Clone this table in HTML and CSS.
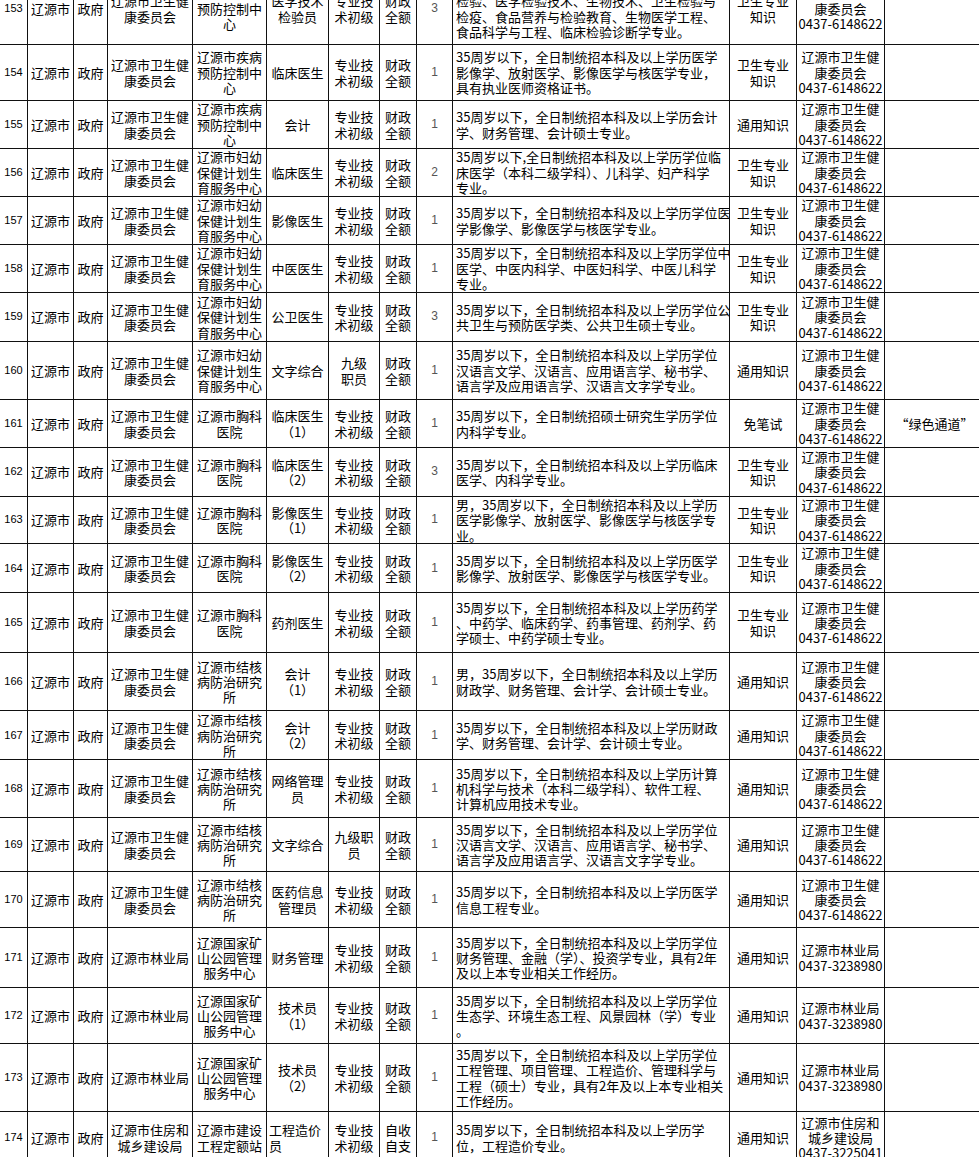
FILE: index.html
```html
<!DOCTYPE html>
<html lang="zh-CN">
<head>
<meta charset="utf-8">
<title>招聘岗位表</title>
<link rel="stylesheet" href="styles.css">
</head>
<body>
<table class="sheet">
<colgroup>
<col class="c-no"><col class="c-area"><col class="c-type"><col class="c-dept"><col class="c-unit"><col class="c-post"><col class="c-level"><col class="c-fund"><col class="c-num"><col class="c-cond"><col class="c-exam"><col class="c-tel"><col class="c-note">
</colgroup>
<tbody>
<tr class="h72"><td class="no">153</td><td>辽源市</td><td>政府</td><td>辽源市卫生健<br>康委员会</td><td>辽源市疾病<br>预防控制中<br>心</td><td>医学技术<br>检验员</td><td>专业技<br>术初级</td><td>财政<br>全额</td><td class="num">3</td><td class="cond">35周岁以下，全日制统招本科及以上学历医学<br>检验、医学检验技术、生物技术、卫生检验与<br>检疫、食品营养与检验教育、生物医学工程、<br>食品科学与工程、临床检验诊断学专业。</td><td>卫生专业<br>知识</td><td>辽源市卫生健<br>康委员会<br>0437-6148622</td><td></td></tr>
<tr class="h56"><td class="no">154</td><td>辽源市</td><td>政府</td><td>辽源市卫生健<br>康委员会</td><td>辽源市疾病<br>预防控制中<br>心</td><td>临床医生</td><td>专业技<br>术初级</td><td>财政<br>全额</td><td class="num">1</td><td class="cond">35周岁以下，全日制统招本科及以上学历医学<br>影像学、放射医学、影像医学与核医学专业，<br>具有执业医师资格证书。</td><td>卫生专业<br>知识</td><td>辽源市卫生健<br>康委员会<br>0437-6148622</td><td></td></tr>
<tr class="h48"><td class="no">155</td><td>辽源市</td><td>政府</td><td>辽源市卫生健<br>康委员会</td><td>辽源市疾病<br>预防控制中<br>心</td><td>会计</td><td>专业技<br>术初级</td><td>财政<br>全额</td><td class="num">1</td><td class="cond">35周岁以下，全日制统招本科及以上学历会计<br>学、财务管理、会计硕士专业。</td><td>通用知识</td><td>辽源市卫生健<br>康委员会<br>0437-6148622</td><td></td></tr>
<tr class="h48"><td class="no">156</td><td>辽源市</td><td>政府</td><td>辽源市卫生健<br>康委员会</td><td>辽源市妇幼<br>保健计划生<br>育服务中心</td><td>临床医生</td><td>专业技<br>术初级</td><td>财政<br>全额</td><td class="num">2</td><td class="cond">35周岁以下,全日制统招本科及以上学历学位临<br>床医学（本科二级学科）、儿科学、妇产科学<br>专业。</td><td>卫生专业<br>知识</td><td>辽源市卫生健<br>康委员会<br>0437-6148622</td><td></td></tr>
<tr class="h48"><td class="no">157</td><td>辽源市</td><td>政府</td><td>辽源市卫生健<br>康委员会</td><td>辽源市妇幼<br>保健计划生<br>育服务中心</td><td>影像医生</td><td>专业技<br>术初级</td><td>财政<br>全额</td><td class="num">1</td><td class="cond">35周岁以下，全日制统招本科及以上学历学位医<br>学影像学、影像医学与核医学专业。</td><td>卫生专业<br>知识</td><td>辽源市卫生健<br>康委员会<br>0437-6148622</td><td></td></tr>
<tr class="h48"><td class="no">158</td><td>辽源市</td><td>政府</td><td>辽源市卫生健<br>康委员会</td><td>辽源市妇幼<br>保健计划生<br>育服务中心</td><td>中医医生</td><td>专业技<br>术初级</td><td>财政<br>全额</td><td class="num">1</td><td class="cond">35周岁以下，全日制统招本科及以上学历学位中<br>医学、中医内科学、中医妇科学、中医儿科学<br>专业。</td><td>卫生专业<br>知识</td><td>辽源市卫生健<br>康委员会<br>0437-6148622</td><td></td></tr>
<tr class="h49"><td class="no">159</td><td>辽源市</td><td>政府</td><td>辽源市卫生健<br>康委员会</td><td>辽源市妇幼<br>保健计划生<br>育服务中心</td><td>公卫医生</td><td>专业技<br>术初级</td><td>财政<br>全额</td><td class="num">3</td><td class="cond">35周岁以下，全日制统招本科及以上学历学位公<br>共卫生与预防医学类、公共卫生硕士专业。</td><td>卫生专业<br>知识</td><td>辽源市卫生健<br>康委员会<br>0437-6148622</td><td></td></tr>
<tr class="h58"><td class="no">160</td><td>辽源市</td><td>政府</td><td>辽源市卫生健<br>康委员会</td><td>辽源市妇幼<br>保健计划生<br>育服务中心</td><td>文字综合</td><td>九级<br>职员</td><td>财政<br>全额</td><td class="num">1</td><td class="cond">35周岁以下，全日制统招本科及以上学历学位<br>汉语言文学、汉语言、应用语言学、秘书学、<br>语言学及应用语言学、汉语言文字学专业。</td><td>通用知识</td><td>辽源市卫生健<br>康委员会<br>0437-6148622</td><td></td></tr>
<tr class="h48"><td class="no">161</td><td>辽源市</td><td>政府</td><td>辽源市卫生健<br>康委员会</td><td>辽源市胸科<br>医院</td><td>临床医生<br>（1）</td><td>专业技<br>术初级</td><td>财政<br>全额</td><td class="num">1</td><td class="cond">35周岁以下，全日制统招硕士研究生学历学位<br>内科学专业。</td><td>免笔试</td><td>辽源市卫生健<br>康委员会<br>0437-6148622</td><td>“绿色通道”</td></tr>
<tr class="h49"><td class="no">162</td><td>辽源市</td><td>政府</td><td>辽源市卫生健<br>康委员会</td><td>辽源市胸科<br>医院</td><td>临床医生<br>（2）</td><td>专业技<br>术初级</td><td>财政<br>全额</td><td class="num">3</td><td class="cond">35周岁以下，全日制统招本科及以上学历临床<br>医学、内科学专业。</td><td>卫生专业<br>知识</td><td>辽源市卫生健<br>康委员会<br>0437-6148622</td><td></td></tr>
<tr class="h47"><td class="no">163</td><td>辽源市</td><td>政府</td><td>辽源市卫生健<br>康委员会</td><td>辽源市胸科<br>医院</td><td>影像医生<br>（1）</td><td>专业技<br>术初级</td><td>财政<br>全额</td><td class="num">1</td><td class="cond">男，35周岁以下，全日制统招本科及以上学历<br>医学影像学、放射医学、影像医学与核医学专<br>业。</td><td>卫生专业<br>知识</td><td>辽源市卫生健<br>康委员会<br>0437-6148622</td><td></td></tr>
<tr class="h49"><td class="no">164</td><td>辽源市</td><td>政府</td><td>辽源市卫生健<br>康委员会</td><td>辽源市胸科<br>医院</td><td>影像医生<br>（2）</td><td>专业技<br>术初级</td><td>财政<br>全额</td><td class="num">1</td><td class="cond">35周岁以下，全日制统招本科及以上学历医学<br>影像学、放射医学、影像医学与核医学专业。</td><td>卫生专业<br>知识</td><td>辽源市卫生健<br>康委员会<br>0437-6148622</td><td></td></tr>
<tr class="h60"><td class="no">165</td><td>辽源市</td><td>政府</td><td>辽源市卫生健<br>康委员会</td><td>辽源市胸科<br>医院</td><td>药剂医生</td><td>专业技<br>术初级</td><td>财政<br>全额</td><td class="num">1</td><td class="cond">35周岁以下，全日制统招本科及以上学历药学<br>、中药学、临床药学、药事管理、药剂学、药<br>学硕士、中药学硕士专业。</td><td>卫生专业<br>知识</td><td>辽源市卫生健<br>康委员会<br>0437-6148622</td><td></td></tr>
<tr class="h58"><td class="no">166</td><td>辽源市</td><td>政府</td><td>辽源市卫生健<br>康委员会</td><td>辽源市结核<br>病防治研究<br>所</td><td>会计<br>（1）</td><td>专业技<br>术初级</td><td>财政<br>全额</td><td class="num">1</td><td class="cond">男，35周岁以下，全日制统招本科及以上学历<br>财政学、财务管理、会计学、会计硕士专业。</td><td>通用知识</td><td>辽源市卫生健<br>康委员会<br>0437-6148622</td><td></td></tr>
<tr class="h49"><td class="no">167</td><td>辽源市</td><td>政府</td><td>辽源市卫生健<br>康委员会</td><td>辽源市结核<br>病防治研究<br>所</td><td>会计<br>（2）</td><td>专业技<br>术初级</td><td>财政<br>全额</td><td class="num">1</td><td class="cond">35周岁以下，全日制统招本科及以上学历财政<br>学、财务管理、会计学、会计硕士专业。</td><td>通用知识</td><td>辽源市卫生健<br>康委员会<br>0437-6148622</td><td></td></tr>
<tr class="h58"><td class="no">168</td><td>辽源市</td><td>政府</td><td>辽源市卫生健<br>康委员会</td><td>辽源市结核<br>病防治研究<br>所</td><td>网络管理<br>员</td><td>专业技<br>术初级</td><td>财政<br>全额</td><td class="num">1</td><td class="cond">35周岁以下，全日制统招本科及以上学历计算<br>机科学与技术（本科二级学科）、软件工程、<br>计算机应用技术专业。</td><td>通用知识</td><td>辽源市卫生健<br>康委员会<br>0437-6148622</td><td></td></tr>
<tr class="h54"><td class="no">169</td><td>辽源市</td><td>政府</td><td>辽源市卫生健<br>康委员会</td><td>辽源市结核<br>病防治研究<br>所</td><td>文字综合</td><td>九级职<br>员</td><td>财政<br>全额</td><td class="num">1</td><td class="cond">35周岁以下，全日制统招本科及以上学历学位<br>汉语言文学、汉语言、应用语言学、秘书学、<br>语言学及应用语言学、汉语言文字学专业。</td><td>通用知识</td><td>辽源市卫生健<br>康委员会<br>0437-6148622</td><td></td></tr>
<tr class="h56"><td class="no">170</td><td>辽源市</td><td>政府</td><td>辽源市卫生健<br>康委员会</td><td>辽源市结核<br>病防治研究<br>所</td><td>医药信息<br>管理员</td><td>专业技<br>术初级</td><td>财政<br>全额</td><td class="num">1</td><td class="cond">35周岁以下，全日制统招本科及以上学历医学<br>信息工程专业。</td><td>通用知识</td><td>辽源市卫生健<br>康委员会<br>0437-6148622</td><td></td></tr>
<tr class="h60"><td class="no">171</td><td>辽源市</td><td>政府</td><td>辽源市林业局</td><td>辽源国家矿<br>山公园管理<br>服务中心</td><td>财务管理</td><td>专业技<br>术初级</td><td>财政<br>全额</td><td class="num">1</td><td class="cond">35周岁以下，全日制统招本科及以上学历学位<br>财务管理、金融（学）、投资学专业，具有2年<br>及以上本专业相关工作经历。</td><td>通用知识</td><td>辽源市林业局<br>0437-3238980</td><td></td></tr>
<tr class="h56"><td class="no">172</td><td>辽源市</td><td>政府</td><td>辽源市林业局</td><td>辽源国家矿<br>山公园管理<br>服务中心</td><td>技术员<br>（1）</td><td>专业技<br>术初级</td><td>财政<br>全额</td><td class="num">1</td><td class="cond">35周岁以下，全日制统招本科及以上学历学位<br>生态学、环境生态工程、风景园林（学）专业<br>。</td><td>通用知识</td><td>辽源市林业局<br>0437-3238980</td><td></td></tr>
<tr class="h68"><td class="no">173</td><td>辽源市</td><td>政府</td><td>辽源市林业局</td><td>辽源国家矿<br>山公园管理<br>服务中心</td><td>技术员<br>（2）</td><td>专业技<br>术初级</td><td>财政<br>全额</td><td class="num">1</td><td class="cond">35周岁以下，全日制统招本科及以上学历学位<br>工程管理、项目管理、工程造价、管理科学与<br>工程（硕士）专业，具有2年及以上本专业相关<br>工作经历。</td><td>通用知识</td><td>辽源市林业局<br>0437-3238980</td><td></td></tr>
<tr class="h52"><td class="no">174</td><td>辽源市</td><td>政府</td><td>辽源市住房和<br>城乡建设局</td><td>辽源市建设<br>工程定额站</td><td class="left">工程造价<br>员</td><td>专业技<br>术初级</td><td>自收<br>自支</td><td class="num">1</td><td class="cond">35周岁以下，全日制统招本科及以上学历学<br>位，工程造价专业。</td><td>通用知识</td><td>辽源市住房和<br>城乡建设局<br>0437-3225041</td><td></td></tr>
</tbody>
</table>
</body>
</html>
```

FILE: styles.css
```css
html, body {
  margin: 0;
  padding: 0;
  background: #fff;
  overflow: hidden;
}

.sheet {
  border-collapse: collapse;
  table-layout: fixed;
  width: 985px;
  margin: -28px 0 0 -1px;
  font-family: "Noto Sans CJK SC", "Noto Sans", sans-serif;
  font-size: 13px;
  line-height: 15.4px;
  color: #000;
}

.c-no { width: 28px; }
.c-area { width: 46px; }
.c-type { width: 34px; }
.c-dept { width: 85px; }
.c-unit { width: 74px; }
.c-post { width: 62px; }
.c-level { width: 51px; }
.c-fund { width: 37px; }
.c-num { width: 36px; }
.c-cond { width: 277px; }
.c-exam { width: 67px; }
.c-tel { width: 88px; }
.c-note { width: 100px; }

.sheet td {
  border: 1px solid #111;
  padding: 0 1px;
  text-align: center;
  vertical-align: middle;
  white-space: nowrap;
  overflow: hidden;
}

.sheet td.cond {
  text-align: left;
  padding-left: 3px;
}

.sheet td.left {
  text-align: left;
  padding-left: 2px;
}

.sheet td.no {
  font-family: "Liberation Sans", Arial, sans-serif;
  font-size: 11px;
}

.sheet td.num {
  font-family: "Liberation Sans", Arial, sans-serif;
  font-size: 12px;
  color: #555;
}

.h47 { height: 47px; }
.h48 { height: 48px; }
.h49 { height: 49px; }
.h52 { height: 52px; }
.h54 { height: 54px; }
.h56 { height: 56px; }
.h58 { height: 58px; }
.h60 { height: 60px; }
.h68 { height: 68px; }
.h72 { height: 72px; }
```
